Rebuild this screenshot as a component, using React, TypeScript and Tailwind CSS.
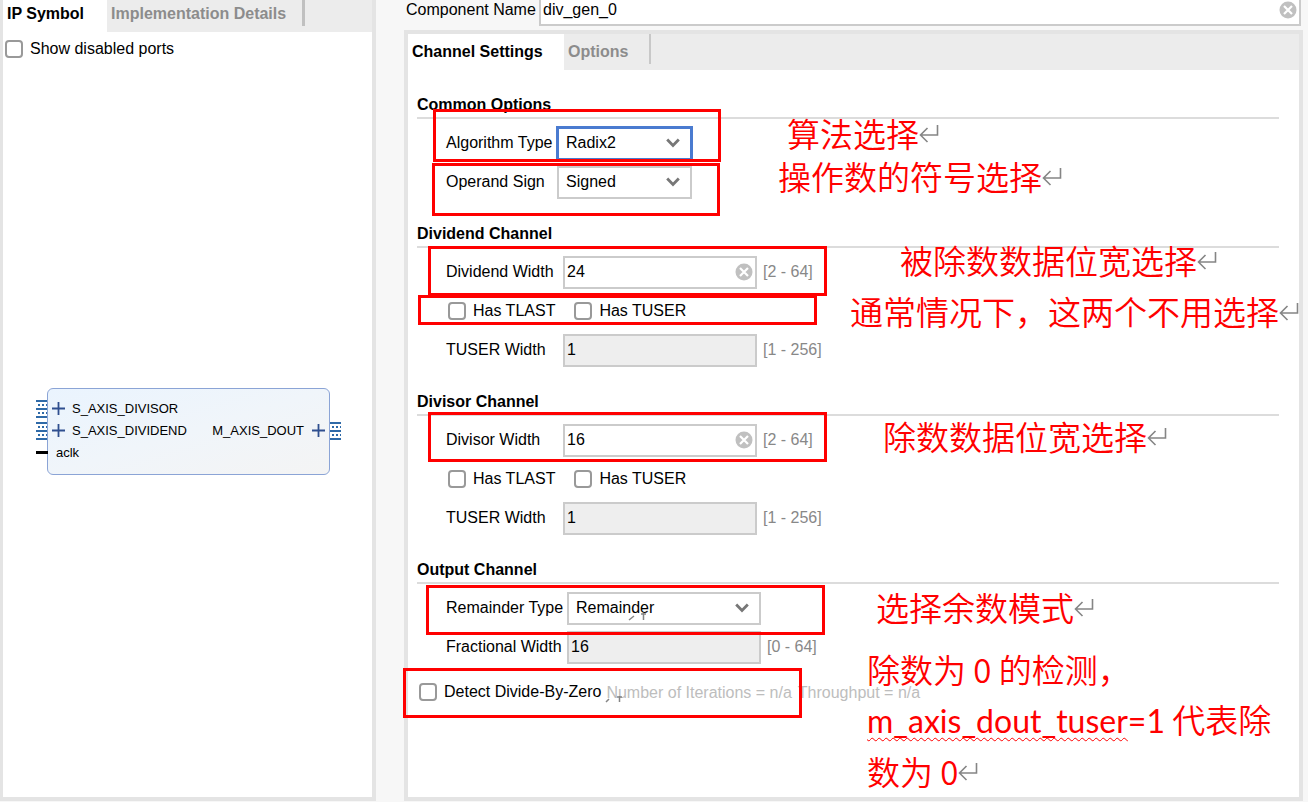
import { useState } from 'react';
import type { ReactNode } from 'react';
import clsx from 'clsx';

interface Mark {
  box: string;
}

const marks: Mark[] = [
  { box: 'left-[433px] top-[109px] w-72 h-[53px]' },
  { box: 'left-[432px] top-[163px] w-72 h-[53px]' },
  { box: 'left-[428px] top-[246px] w-[399px] h-[50px]' },
  { box: 'left-[418px] top-[295px] w-[399px] h-[30px]' },
  { box: 'left-[428px] top-[412px] w-[399px] h-[50px]' },
  { box: 'left-[426px] top-[585px] w-[399px] h-[50px]' },
  { box: 'left-[403px] top-[668px] w-[399px] h-[50px]' },
];

const notes = [
  { text: '算法选择', place: 'left-[787px] top-[111px]' },
  { text: '操作数的符号选择', place: 'left-[778px] top-[154px]' },
  { text: '被除数数据位宽选择', place: 'left-[900px] top-[238px]' },
  { text: '通常情况下，这两个不用选择', place: 'left-[850px] top-[289px]' },
  { text: '除数数据位宽选择', place: 'left-[883px] top-[414px]' },
  { text: '选择余数模式', place: 'left-[876px] top-[585px]' },
];

function ReturnMark() {
  return (
    <svg className="mb-1 inline-block align-baseline" width="20" height="18" viewBox="0 0 20 18" fill="none" stroke="#858585" strokeWidth="1.6" aria-hidden="true">
      <path d="M18.5 0V10H1.500M8.5 3L1.500 10L8.5 17" />
    </svg>
  );
}

function ClearButton({ label, onClick }: { label: string; onClick: () => void }) {
  return (
    <button type="button" aria-label={label} onClick={onClick} className="absolute right-1 top-1/2 -translate-y-1/2">
      <svg width="18" height="18" viewBox="0 0 18 18" aria-hidden="true">
        <circle cx="9" cy="9" r="8.5" fill="#c0c0c0" />
        <path d="M5 5L13 13M13 5L5 13" stroke="#fff" strokeWidth="2.2" />
      </svg>
    </button>
  );
}

function CheckBox({ label }: { label: string }) {
  return (
    <label className="flex items-center gap-[7px]">
      <input type="checkbox" className="h-[18px] w-[18px] appearance-none rounded-sm border-2 border-[#999] bg-white checked:bg-[#4a7bd0]" />
      {label}
    </label>
  );
}

function Section({ title, children }: { title: string; children: ReactNode }) {
  return (
    <section>
      <h2 className="border-b-2 border-[#dcdcdc] font-bold leading-6">{title}</h2>
      <div className="flex flex-col gap-[7px] pl-[29px] pt-2">{children}</div>
    </section>
  );
}

interface FieldProps {
  id: string;
  label: string;
  labelWidth: string;
  initial: string;
  range: string;
  disabled?: boolean;
}

function NumberField({ id, label, labelWidth, initial, range, disabled }: FieldProps) {
  const [value, setValue] = useState(initial);

  return (
    <div className="flex h-8 items-center">
      <label htmlFor={id} className={clsx('shrink-0', labelWidth)}>{label}</label>
      <div className="relative">
        <input
          id={id}
          type="text"
          value={value}
          disabled={disabled}
          onChange={(e) => setValue(e.target.value)}
          className="block h-[33px] w-[194px] border-2 border-[#cbcbcb] bg-white px-0.5 disabled:bg-[#eee]"
        />
        {!disabled && <ClearButton label={`Clear ${label}`} onClick={() => setValue('')} />}
      </div>
      <span className="ml-1.5 text-[#888]">{range}</span>
    </div>
  );
}

interface SelectProps {
  id: string;
  label: string;
  labelWidth: string;
  width: string;
  options: string[];
  active?: boolean;
}

function SelectField({ id, label, labelWidth, width, options, active }: SelectProps) {
  return (
    <div className="flex h-8 items-center">
      <label htmlFor={id} className={clsx('shrink-0', labelWidth)}>{label}</label>
      <div className={clsx('relative', width)}>
        <select
          id={id}
          className={clsx(
            'block h-[33px] w-full appearance-none border-2 bg-white px-[7px]',
            active ? 'border-[#4a7bd0] outline outline-[#4a7bd0]' : 'border-[#cbcbcb]'
          )}
        >
          {options.map(option => (
            <option key={option}>{option}</option>
          ))}
        </select>
        <svg className="pointer-events-none absolute right-3 top-1/2 -translate-y-1/2" width="14" height="10" viewBox="0 0 14 10" fill="none" aria-hidden="true">
          <path d="M1.2 1.5L7 7.5L12.8 1.5" stroke="#777" strokeWidth="2.8" />
        </svg>
      </div>
    </div>
  );
}

function ChannelChecks() {
  return (
    <div className="flex h-8 items-center gap-[19px] pl-0.5">
      <CheckBox label="Has TLAST" />
      <CheckBox label="Has TUSER" />
    </div>
  );
}

function BusPort() {
  return (
    <svg className="shrink-0" width="11" height="18" viewBox="0 0 11 18" stroke="#2f6aa8" aria-hidden="true">
      <path d="M0 1H11M0 9H11M0 17H11" strokeWidth="2" />
      <path d="M2 5H11M2 13H11" strokeWidth="2" strokeDasharray="2 2" />
    </svg>
  );
}

function Plus() {
  return (
    <svg className="shrink-0" width="13" height="13" viewBox="0 0 13 13" stroke="#2f4f8f" strokeWidth="1.8" aria-hidden="true">
      <path d="M0 6.5H13M6.5 0V13" />
    </svg>
  );
}

function IpSymbol() {
  return (
    <div className="relative flex h-[87px] w-[283px] flex-col rounded-md border border-[#8ba4d6] bg-linear-to-br from-[#eaf4fe] via-[#f0f5fa] to-[#f4f4f4] pt-[9px] text-[13px] leading-[22px]">
      <div className="-ml-3 flex items-center">
        <BusPort />
        <span className="ml-[5px] mr-[7px]"><Plus /></span>
        S_AXIS_DIVISOR
      </div>
      <div className="-mx-3 flex items-center">
        <BusPort />
        <span className="ml-[5px] mr-[7px]"><Plus /></span>
        S_AXIS_DIVIDEND
        <span className="ml-auto">M_AXIS_DOUT</span>
        <span className="ml-2 mr-[5px]"><Plus /></span>
        <BusPort />
      </div>
      <div className="-ml-3 flex items-center gap-2">
        <span className="h-[3px] w-3 bg-black" />
        aclk
      </div>
    </div>
  );
}

export default function App() {
  const [name, setName] = useState('div_gen_0');

  return (
    <div className="relative flex min-h-screen gap-7 overflow-hidden bg-[#f7f7f7] pb-px pr-[5px] font-['Liberation_Sans',Arial,sans-serif] text-base leading-5 text-black">
      <aside className="flex w-[376px] shrink-0 flex-col border-b-4 border-l-[3px] border-r-4 border-[#e4e4e4] bg-white">
        <div className="flex h-8 bg-[#ececec] font-bold">
          <button type="button" className="w-[104px] bg-white pb-1 pl-1 text-left">IP Symbol</button>
          <button type="button" className="pb-1 pl-1 pr-4 text-[#8c8c8c]">Implementation Details</button>
          <div className="h-[26px] w-[3px] bg-[#c0c0c0]" />
        </div>
        <div className="px-0.5 pt-[7px]">
          <CheckBox label="Show disabled ports" />
        </div>
        <div className="flex flex-1 items-center justify-center pl-0.5 pt-1.5">
          <IpSymbol />
        </div>
      </aside>

      <main className="flex min-w-0 flex-1 flex-col">
        <div className="flex h-[26px] items-stretch px-0.5">
          <label htmlFor="component-name" className="w-[133px] shrink-0">Component Name</label>
          <div className="relative flex-1">
            <input
              id="component-name"
              type="text"
              value={name}
              onChange={(e) => setName(e.target.value)}
              className="block h-full w-full border-2 border-t-0 border-[#cbcbcb] bg-white px-0.5 pb-1"
            />
            <div className="absolute right-0 top-0 h-[19px]">
              <ClearButton label="Clear component name" onClick={() => setName('')} />
            </div>
          </div>
        </div>

        <div className="mt-1 flex flex-1 flex-col border-4 border-[#e4e4e4] bg-white">
          <div className="flex h-9 bg-[#ececec] font-bold">
            <button type="button" className="w-[156px] bg-white pl-1 text-left">Channel Settings</button>
            <button type="button" className="w-[85px] pl-1 text-left text-[#8c8c8c]">Options</button>
            <div className="h-[30px] w-0.5 bg-[#c8c8c8]" />
          </div>

          <div className="flex flex-col gap-6 pl-[9px] pr-5 pt-[23px]">
            <Section title="Common Options">
              <SelectField id="algorithm" label="Algorithm Type" labelWidth="w-[111px]" width="w-[135px]" options={['Radix2', 'High Radix', 'LutMult']} active />
              <SelectField id="sign" label="Operand Sign" labelWidth="w-[111px]" width="w-[135px]" options={['Signed', 'Unsigned']} />
            </Section>

            <Section title="Dividend Channel">
              <NumberField id="dividend" label="Dividend Width" labelWidth="w-[117px]" initial="24" range="[2 - 64]" />
              <ChannelChecks />
              <NumberField id="dividend-tuser" label="TUSER Width" labelWidth="w-[117px]" initial="1" range="[1 - 256]" disabled />
            </Section>

            <Section title="Divisor Channel">
              <NumberField id="divisor" label="Divisor Width" labelWidth="w-[117px]" initial="16" range="[2 - 64]" />
              <ChannelChecks />
              <NumberField id="divisor-tuser" label="TUSER Width" labelWidth="w-[117px]" initial="1" range="[1 - 256]" disabled />
            </Section>

            <Section title="Output Channel">
              <SelectField id="remainder" label="Remainder Type" labelWidth="w-[121px]" width="w-[194px]" options={['Remainder', 'Fractional']} />
              <NumberField id="fractional" label="Fractional Width" labelWidth="w-[121px]" initial="16" range="[0 - 64]" disabled />
            </Section>
          </div>

          <div className="flex items-center gap-[5px] pl-[11px] pt-[17px]">
            <CheckBox label="Detect Divide-By-Zero" />
            <p className="flex gap-1.5 pt-[3px] text-[#bdbdbd]">
              <span>Number of Iterations = n/a</span>
              <span>Throughput = n/a</span>
            </p>
          </div>
        </div>
      </main>

      {/* review marks drawn over the dialog */}
      <div className="pointer-events-none absolute inset-0">
        {marks.map(mark => (
          <div key={mark.box} className={clsx('absolute border-[3px] border-[#f00]', mark.box)} />
        ))}
        <svg className="absolute left-[628px] top-[613px]" width="18" height="8" viewBox="0 0 18 8" stroke="#858585" strokeWidth="1.5" aria-hidden="true">
          <path d="M1 7L6 3M15.500 0V7M13 1H18" />
        </svg>
        <svg className="absolute left-[605px] top-[695px]" width="18" height="8" viewBox="0 0 18 8" stroke="#858585" strokeWidth="1.5" aria-hidden="true">
          <path d="M1 7L4 4M14.500 1V7M12 2H17" />
        </svg>
        <div className="font-['Noto_Sans_CJK_SC',sans-serif] text-[33px] font-[350] leading-[44px] text-[#f00]">
          {notes.map(note => (
            <p key={note.text} className={clsx('absolute whitespace-nowrap', note.place)}>
              {note.text}
              <ReturnMark />
            </p>
          ))}
          <p className="absolute left-[867px] top-[644px] whitespace-nowrap leading-[50px]">
            除数为 0 的检测，
            <br />
            <span className="font-['Lato','Noto_Sans_CJK_SC',sans-serif] text-[32px] font-normal">
              <span className="underline decoration-wavy decoration-1 underline-offset-4">m_axis_dout_tuser</span>=1
            </span>{' '}
            代表除
            <br />
            数为 0<ReturnMark />
          </p>
        </div>
      </div>
    </div>
  );
}
